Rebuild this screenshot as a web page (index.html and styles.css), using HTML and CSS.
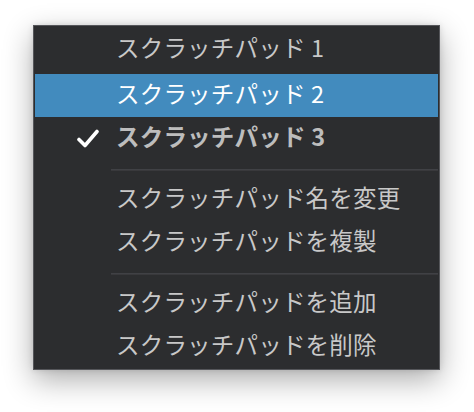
FILE: index.html
```html
<!DOCTYPE html>
<html lang="ja">
<head>
  <meta charset="UTF-8">
  <title>スクラッチパッド</title>
  <link rel="stylesheet" href="styles.css">
</head>
<body>
  <div class="menu">
    <div class="menu-item">
      <span class="check"></span>
      <span class="label">スクラッチパッド 1</span>
    </div>
    <div class="menu-item active">
      <span class="check"></span>
      <span class="label">スクラッチパッド 2</span>
    </div>
    <div class="menu-item current">
      <span class="check">
        <svg width="22" height="19" viewBox="0 0 22 19">
          <path d="M2 10.5 L8 16.5 L20 2.5" fill="none" stroke="#fff" stroke-width="3.6" stroke-linecap="round" stroke-linejoin="round"/>
        </svg>
      </span>
      <span class="label">スクラッチパッド 3</span>
    </div>

    <div class="separator"></div>

    <div class="menu-item">
      <span class="check"></span>
      <span class="label">スクラッチパッド名を変更</span>
    </div>
    <div class="menu-item">
      <span class="check"></span>
      <span class="label">スクラッチパッドを複製</span>
    </div>

    <div class="separator"></div>

    <div class="menu-item">
      <span class="check"></span>
      <span class="label">スクラッチパッドを追加</span>
    </div>
    <div class="menu-item">
      <span class="check"></span>
      <span class="label">スクラッチパッドを削除</span>
    </div>
  </div>
</body>
</html>
```

FILE: styles.css
```css
:root {
  --menu-bg: #2c2d2f;
  --menu-border: #55565a;
  --highlight: #428bbe;
  --text-color: #c8c8c8;
  --sep-color: #404145;
}

* {
  box-sizing: border-box;
  margin: 0;
  padding: 0;
}

html, body {
  height: 100%;
}

body {
  background: #fff;
  font-family: "Noto Sans CJK JP", "Noto Sans", sans-serif;
  padding-top: 25px;
  overflow: hidden;
}

.menu {
  margin-left: 33px;
  width: 407px;
  padding: 3px 1px 1px;
  background: var(--menu-bg);
  border: 1px solid var(--menu-border);
  box-shadow: 0 10px 28px rgba(0, 0, 0, 0.32), 0 0 6px rgba(0, 0, 0, 0.12);
}

.menu-item {
  display: flex;
  align-items: center;
  height: 43px;
  color: var(--text-color);
  font-size: 23.5px;
  line-height: 1;
}

.menu-item:first-child {
  height: 45px;
  padding-bottom: 4px;
}

.menu-item.active {
  background: var(--highlight);
  color: #fff;
}

.menu-item.current {
  font-weight: bold;
  color: #bdbdbd;
}

.check {
  width: 81px;
  flex-shrink: 0;
  display: flex;
  padding-left: 42px;
}

.label {
  padding-bottom: 3px;
  letter-spacing: 0.2px;
}

.separator {
  height: 1px;
  margin: 9px 0 8px 76px;
  background: var(--sep-color);
  box-shadow: 0 1px 0 rgba(70, 70, 74, 0.5);
}
```
